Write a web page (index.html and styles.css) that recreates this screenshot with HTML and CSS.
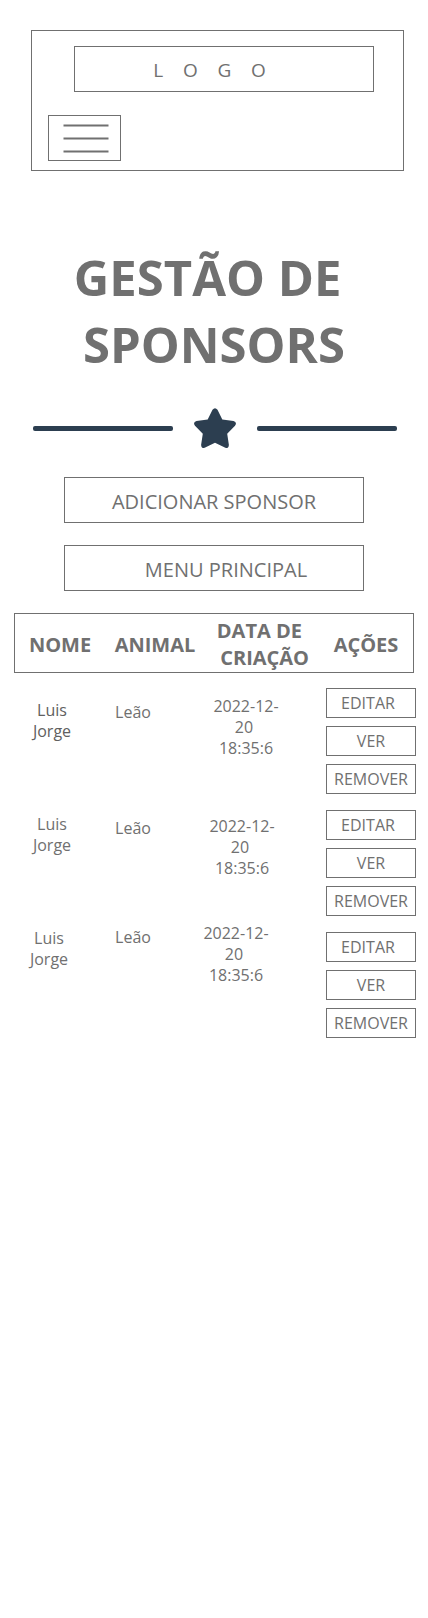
FILE: index.html
```html
<!DOCTYPE html>
<html lang="pt">
<head>
<meta charset="utf-8">
<meta name="viewport" content="width=device-width, initial-scale=1">
<title>Gestão de Sponsors</title>
<link rel="stylesheet" href="styles.css">
</head>
<body>
<header class="site-header">
  <a class="logo" href="#">L    O    G    O</a>
  <button class="menu-toggle" type="button" aria-label="Menu">
    <svg class="menu-icon" viewBox="0 0 46 30" aria-hidden="true">
      <path d="M0.5 2.5H45.5M0.5 15.5H45.5M0.5 28.5H45.5"/>
    </svg>
  </button>
</header>
<main>
  <h1 class="title">GESTÃO DE&nbsp;<br>SPONSORS</h1>
  <div class="divider">
    <span class="divider-line"></span>
    <svg class="star" viewBox="0 0 42 40" aria-hidden="true">
      <path d="M18.500 1.800Q21 -1.400 23.500 1.800L28.300 11.600L39.500 13Q43.500 14.300 41 17.800L33.200 25.800L34.900 37Q34.700 41.300 30.800 39.600L21 34.800L11.200 39.600Q7.300 41.300 7.100 37L8.800 25.800L1 17.800Q-1.500 14.300 2.500 13L13.700 11.600Z"/>
    </svg>
    <span class="divider-line"></span>
  </div>
  <nav class="page-actions">
    <button class="button" type="button">ADICIONAR SPONSOR</button>
    <button class="button button-main-menu" type="button">MENU PRINCIPAL</button>
  </nav>
  <table class="sponsors">
    <thead>
      <tr class="head-row">
        <th scope="col">NOME</th>
        <th scope="col">ANIMAL</th>
        <th scope="col">DATA DE&nbsp;<br>&nbsp;CRIAÇÃO</th>
        <th scope="col">AÇÕES</th>
      </tr>
    </thead>
    <tbody>
      <tr class="row row-first">
        <td class="name">Luis<br>Jorge</td>
        <td class="animal">Leão</td>
        <td class="date">2022-12-<br>20&nbsp;<br>18:35:6</td>
        <td class="actions">
          <button class="small-button small-button-edit" type="button">EDITAR</button>
          <button class="small-button" type="button">VER</button>
          <button class="small-button" type="button">REMOVER</button>
        </td>
      </tr>
      <tr class="row row-second">
        <td class="name">Luis<br>Jorge</td>
        <td class="animal">Leão</td>
        <td class="date">2022-12-<br>20&nbsp;<br>18:35:6</td>
        <td class="actions">
          <button class="small-button small-button-edit" type="button">EDITAR</button>
          <button class="small-button" type="button">VER</button>
          <button class="small-button" type="button">REMOVER</button>
        </td>
      </tr>
      <tr class="row row-third">
        <td class="name">Luis<br>Jorge</td>
        <td class="animal">Leão</td>
        <td class="date">2022-12-<br>20&nbsp;<br>18:35:6</td>
        <td class="actions">
          <button class="small-button small-button-edit" type="button">EDITAR</button>
          <button class="small-button" type="button">VER</button>
          <button class="small-button" type="button">REMOVER</button>
        </td>
      </tr>
    </tbody>
  </table>
</main>
</body>
</html>
```

FILE: styles.css
```css
* {
  box-sizing: border-box;
}

body {
  margin: 0;
  background: #fff;
  color: #707070;
  font-family: "Open Sans", "Noto Sans", sans-serif;
  font-size: 16px;
  line-height: 21px;
}

button {
  margin: 0;
  padding: 0;
  border: 1px solid #707070;
  background: #fff;
  color: inherit;
  font: inherit;
  cursor: pointer;
}

.site-header {
  display: flex;
  flex-direction: column;
  align-items: flex-start;
  gap: 23px;
  margin: 30px 24px 0 31px;
  padding: 15px 29px 9px 16px;
  border: 1px solid #707070;
}

.logo {
  align-self: stretch;
  margin-left: 26px;
  padding: 10px 29px 8px 0;
  border: 1px solid #707070;
  color: inherit;
  font-size: 19px;
  line-height: 26px;
  text-align: center;
  text-decoration: none;
  white-space: pre;
}

.menu-toggle {
  display: flex;
  justify-content: center;
  align-items: center;
  width: 73px;
  height: 46px;
  padding: 0 0 0 3px;
}

.menu-icon {
  width: 46px;
  height: 30px;
  fill: none;
  stroke: #707070;
  stroke-width: 2;
}

.title {
  margin: 73px 0 0;
  font-size: 49px;
  font-weight: 700;
  line-height: 67px;
  text-align: center;
}

.divider {
  display: flex;
  align-items: center;
  gap: 21px;
  margin: 30px 31px 0 33px;
}

.divider-line {
  flex: 1;
  height: 5px;
  border-radius: 2px;
  background: #2c3e50;
}

.star {
  width: 42px;
  height: 40px;
  fill: #2c3e50;
}

.page-actions {
  display: flex;
  flex-direction: column;
  gap: 22px;
  margin: 29px 64px 22px;
}

.button {
  height: 46px;
  padding-top: 3px;
  font-size: 20px;
  line-height: 26px;
}

.button-main-menu {
  padding-left: 24px;
}

.sponsors,
.sponsors thead,
.sponsors tbody {
  display: block;
}

.head-row {
  display: grid;
  grid-template-columns: 90fr 100fr 114fr 94fr;
  align-items: center;
  margin: 0 14px;
  padding: 3px 0 1px;
  border: 1px solid #707070;
}

.head-row th {
  padding: 0;
  font-size: 20px;
  line-height: 27px;
}

.row {
  display: grid;
  grid-template-columns: 76fr 86fr 140fr 100px;
  margin: 0 12px 0 14px;
  text-align: center;
}

.row td {
  padding: 0;
}

.row .actions {
  display: flex;
  flex-direction: column;
  gap: 8px;
  padding: 15px 0 1px 10px;
}

.small-button {
  height: 30px;
}

.small-button-edit {
  padding-right: 6px;
}

.row-first .name {
  padding-top: 27px;
  color: #606060;
}

.row-first .animal {
  padding-top: 29px;
}

.row-first .date {
  padding-top: 23px;
}

.row-second .name {
  padding-top: 19px;
}

.row-second .animal {
  padding-top: 23px;
}

.row-second .date {
  padding: 21px 8px 0 0;
}

.row-third .name {
  padding: 11px 6px 0 0;
}

.row-third .animal {
  padding-top: 10px;
}

.row-third .date {
  padding: 6px 20px 0 0;
}
```
